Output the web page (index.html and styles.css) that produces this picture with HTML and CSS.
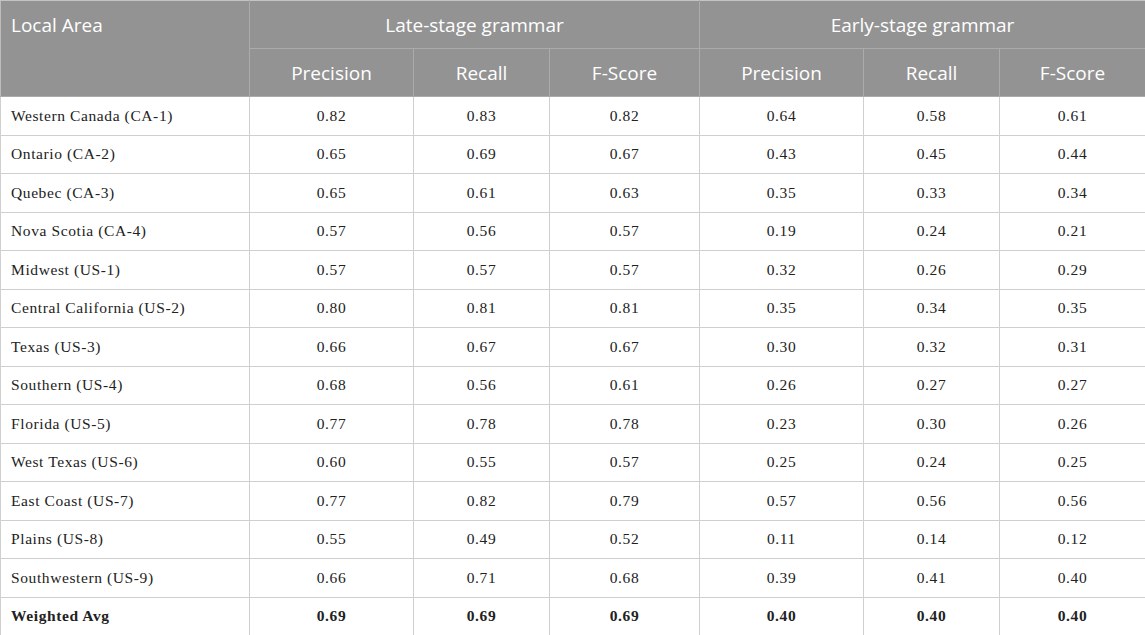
FILE: index.html
```html
<!DOCTYPE html>
<html>
<head>
<meta charset="utf-8">
<link rel="stylesheet" href="styles.css">
</head>
<body>
<table class="tbl">
  <colgroup>
    <col class="c-area"><col class="c-p"><col class="c-r"><col class="c-f"><col class="c-p"><col class="c-r"><col class="c-f2">
  </colgroup>
  <thead>
    <tr class="h1">
      <th rowspan="2" class="area-h">Local Area</th>
      <th colspan="3">Late-stage grammar</th>
      <th colspan="3">Early-stage grammar</th>
    </tr>
    <tr class="h2">
      <th>Precision</th><th>Recall</th><th>F-Score</th>
      <th>Precision</th><th>Recall</th><th>F-Score</th>
    </tr>
  </thead>
  <tbody>
    <tr><td>Western Canada (CA-1)</td><td>0.82</td><td>0.83</td><td>0.82</td><td>0.64</td><td>0.58</td><td>0.61</td></tr>
    <tr><td>Ontario (CA-2)</td><td>0.65</td><td>0.69</td><td>0.67</td><td>0.43</td><td>0.45</td><td>0.44</td></tr>
    <tr><td>Quebec (CA-3)</td><td>0.65</td><td>0.61</td><td>0.63</td><td>0.35</td><td>0.33</td><td>0.34</td></tr>
    <tr><td>Nova Scotia (CA-4)</td><td>0.57</td><td>0.56</td><td>0.57</td><td>0.19</td><td>0.24</td><td>0.21</td></tr>
    <tr><td>Midwest (US-1)</td><td>0.57</td><td>0.57</td><td>0.57</td><td>0.32</td><td>0.26</td><td>0.29</td></tr>
    <tr><td>Central California (US-2)</td><td>0.80</td><td>0.81</td><td>0.81</td><td>0.35</td><td>0.34</td><td>0.35</td></tr>
    <tr><td>Texas (US-3)</td><td>0.66</td><td>0.67</td><td>0.67</td><td>0.30</td><td>0.32</td><td>0.31</td></tr>
    <tr><td>Southern (US-4)</td><td>0.68</td><td>0.56</td><td>0.61</td><td>0.26</td><td>0.27</td><td>0.27</td></tr>
    <tr><td>Florida (US-5)</td><td>0.77</td><td>0.78</td><td>0.78</td><td>0.23</td><td>0.30</td><td>0.26</td></tr>
    <tr><td>West Texas (US-6)</td><td>0.60</td><td>0.55</td><td>0.57</td><td>0.25</td><td>0.24</td><td>0.25</td></tr>
    <tr><td>East Coast (US-7)</td><td>0.77</td><td>0.82</td><td>0.79</td><td>0.57</td><td>0.56</td><td>0.56</td></tr>
    <tr><td>Plains (US-8)</td><td>0.55</td><td>0.49</td><td>0.52</td><td>0.11</td><td>0.14</td><td>0.12</td></tr>
    <tr><td>Southwestern (US-9)</td><td>0.66</td><td>0.71</td><td>0.68</td><td>0.39</td><td>0.41</td><td>0.40</td></tr>
    <tr class="avg"><td>Weighted Avg</td><td>0.69</td><td>0.69</td><td>0.69</td><td>0.40</td><td>0.40</td><td>0.40</td></tr>
  </tbody>
</table>
</body>
</html>
```

FILE: styles.css
```css
html, body {
  margin: 0;
  padding: 0;
  background: #ffffff;
}

.tbl {
  width: 1145px;
  border-collapse: collapse;
  table-layout: fixed;
}

.c-area { width: 249px; }
.c-p { width: 164px; }
.c-r { width: 136px; }
.c-f { width: 150px; }
.c-f2 { width: 146px; }

.tbl th {
  background: #939393;
  color: #ffffff;
  font-family: "Open Sans", "Noto Sans", sans-serif;
  font-weight: 400;
  font-size: 19px;
  height: 47px;
  padding: 0;
  text-align: center;
  vertical-align: middle;
  border: 1px solid #ababab;
}

.tbl th.area-h {
  text-align: left;
  vertical-align: top;
  padding: 11px 0 0 10px;
  border-left-color: #bdbdbd;
}

.h1 th { border-top-color: #c4c4c4; }

.tbl td {
  font-family: "Liberation Serif", "Times New Roman", serif;
  font-size: 15.5px;
  color: #222222;
  letter-spacing: 0.6px;
  height: 37.5px;
  padding: 0;
  text-align: center;
  vertical-align: middle;
  border: 1px solid #cfcfcf;
}

.tbl td:first-child {
  text-align: left;
  padding-left: 10px;
}

.avg td { font-weight: 700; }
```
